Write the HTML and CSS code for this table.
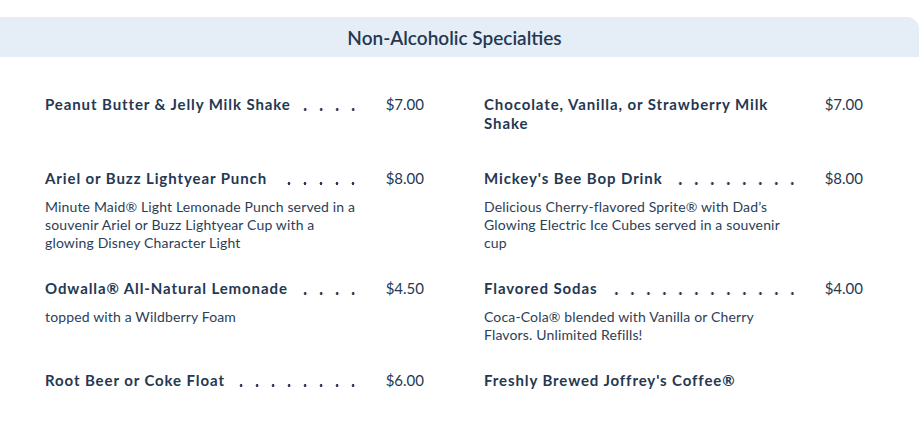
FILE: index.html
```html
<!DOCTYPE html>
<html lang="en">
<head>
<meta charset="utf-8">
<title>Non-Alcoholic Specialties</title>
<link rel="stylesheet" href="styles.css">
</head>
<body>
<section class="menu">
  <h2 class="band"><span class="band-title">Non-Alcoholic Specialties</span></h2>
  <div class="grid">
    <div class="item">
      <div class="line"><span class="name">Peanut Butter &amp; Jelly Milk Shake</span><span class="dots"></span><span class="price">$7.00</span></div>
      <p class="desc"></p>
    </div>
    <div class="item">
      <div class="line"><span class="name">Chocolate, Vanilla, or Strawberry Milk Shake</span><span class="dots"></span><span class="price">$7.00</span></div>
      <p class="desc"></p>
    </div>
    <div class="item">
      <div class="line"><span class="name">Ariel or Buzz Lightyear Punch</span><span class="dots"></span><span class="price">$8.00</span></div>
      <p class="desc">Minute Maid® Light Lemonade Punch served in a souvenir Ariel or Buzz Lightyear Cup with a glowing Disney Character Light</p>
    </div>
    <div class="item">
      <div class="line"><span class="name">Mickey's Bee Bop Drink</span><span class="dots"></span><span class="price">$8.00</span></div>
      <p class="desc">Delicious Cherry-flavored Sprite® with Dad’s Glowing Electric Ice Cubes served in a souvenir cup</p>
    </div>
    <div class="item">
      <div class="line"><span class="name">Odwalla® All-Natural Lemonade</span><span class="dots"></span><span class="price">$4.50</span></div>
      <p class="desc">topped with a Wildberry Foam</p>
    </div>
    <div class="item">
      <div class="line"><span class="name">Flavored Sodas</span><span class="dots"></span><span class="price">$4.00</span></div>
      <p class="desc">Coca-Cola® blended with Vanilla or Cherry Flavors. Unlimited Refills!</p>
    </div>
    <div class="item">
      <div class="line"><span class="name">Root Beer or Coke Float</span><span class="dots"></span><span class="price">$6.00</span></div>
      <p class="desc"></p>
    </div>
    <div class="item">
      <div class="line"><span class="name">Freshly Brewed Joffrey's Coffee®</span></div>
      <p class="desc"></p>
    </div>
  </div>
</section>
</body>
</html>
```

FILE: styles.css
```css
html, body {
  margin: 0;
  padding: 0;
  background: #ffffff;
}

body {
  font-family: Lato, "Noto Sans", sans-serif;
  color: #253852;
  overflow: hidden;
}

.menu {
  padding-top: 17px;
}

.band {
  margin: 0;
  width: 919px;
  height: 40px;
  box-sizing: border-box;
  padding-right: 10px;
  background: #e5eef7;
  border-top-right-radius: 12px;
  display: flex;
  align-items: center;
  justify-content: center;
}

.band-title {
  font-size: 19px;
  font-weight: 600;
  color: #253852;
}

.grid {
  display: grid;
  grid-template-columns: 379px 379px;
  column-gap: 60px;
  row-gap: 26px;
  padding: 38px 0 0 45px;
}

.line {
  display: flex;
  align-items: flex-start;
  line-height: 19px;
  font-size: 15px;
}

.name {
  flex: 0 1 auto;
  font-weight: 700;
  letter-spacing: 0.9px;
  max-width: 318px;
}

.dots {
  flex: 1 1 0;
  min-width: 0;
  max-width: 310px;
  height: 19px;
  margin-left: 10px;
  background-image: radial-gradient(circle at 14px 14.5px, #253852 1.1px, rgba(37, 56, 82, 0) 1.7px);
  background-size: 16px 19px;
  background-position: right top;
  background-repeat: repeat-x;
}

.price {
  flex: 0 0 69px;
  margin-left: auto;
  text-align: right;
  font-weight: 400;
}

.desc {
  margin: 10px 0 0;
  max-width: 315px;
  font-size: 14px;
  line-height: 18px;
  letter-spacing: 0.15px;
  color: #2c3e57;
}

.desc:not(:empty) {
  padding-bottom: 1px;
}
```
